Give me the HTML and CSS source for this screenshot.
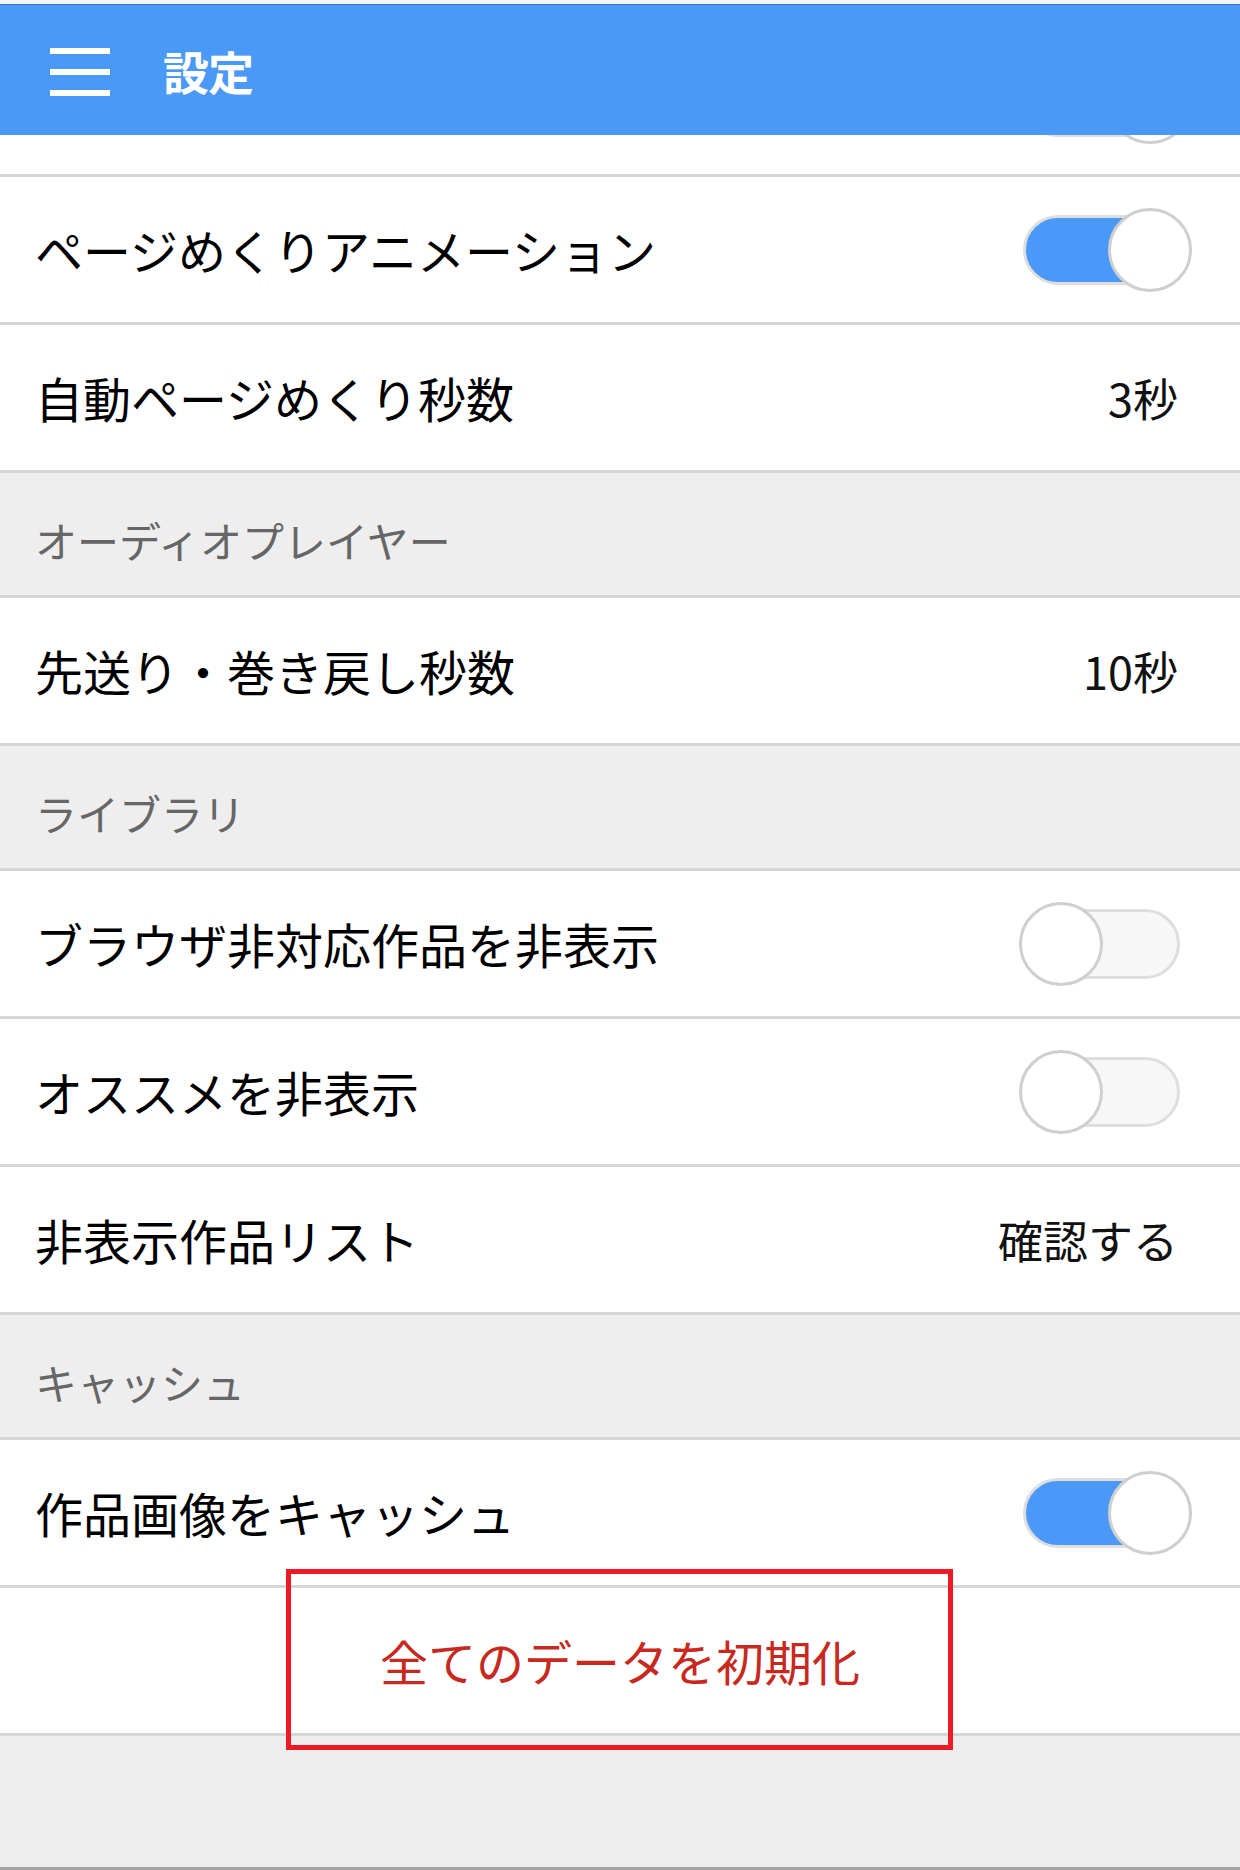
FILE: index.html
```html
<!DOCTYPE html>
<html lang="ja">
<head>
<meta charset="utf-8">
<title>設定</title>
<link rel="stylesheet" href="styles.css">
</head>
<body>
<div class="app">
  <div class="statusbar"></div>
  <header class="appbar">
    <div class="hamburger"><span></span><span></span><span></span></div>
    <h1 class="title">設定</h1>
  </header>
  <main class="content">
    <div class="list">
      <div class="row">
        <span class="label"></span>
        <div class="toggle on"><div class="track"></div><div class="knob"></div></div>
      </div>
      <div class="row">
        <span class="label">ページめくりアニメーション</span>
        <div class="toggle on"><div class="track"></div><div class="knob"></div></div>
      </div>
      <div class="row">
        <span class="label">自動ページめくり秒数</span>
        <span class="value">3秒</span>
      </div>
      <div class="section">オーディオプレイヤー</div>
      <div class="row">
        <span class="label">先送り・巻き戻し秒数</span>
        <span class="value">10秒</span>
      </div>
      <div class="section">ライブラリ</div>
      <div class="row">
        <span class="label">ブラウザ非対応作品を非表示</span>
        <div class="toggle"><div class="track"></div><div class="knob"></div></div>
      </div>
      <div class="row">
        <span class="label">オススメを非表示</span>
        <div class="toggle"><div class="track"></div><div class="knob"></div></div>
      </div>
      <div class="row">
        <span class="label">非表示作品リスト</span>
        <span class="value">確認する</span>
      </div>
      <div class="section">キャッシュ</div>
      <div class="row">
        <span class="label">作品画像をキャッシュ</span>
        <div class="toggle on"><div class="track"></div><div class="knob"></div></div>
      </div>
      <div class="row reset">
        <span class="reset-label">全てのデータを初期化</span>
      </div>
    </div>
  </main>
  <div class="highlight"></div>
</div>
</body>
</html>
```

FILE: styles.css
```css
* { box-sizing: border-box; }

html, body {
  margin: 0;
  padding: 0;
  background: #ffffff;
}

body {
  font-family: "Noto Sans CJK JP", "Noto Sans", sans-serif;
  color: #000;
}

.app {
  position: relative;
  width: 1240px;
  height: 1870px;
  display: flex;
  flex-direction: column;
  overflow: hidden;
}

.statusbar {
  height: 4px;
  background: #f3f4f6;
  flex: none;
}

.appbar {
  flex: none;
  height: 131px;
  background: #4b99f7;
  border-top: 1px solid #3b6fc4;
  display: flex;
  align-items: center;
  padding-left: 50px;
  position: relative;
  z-index: 2;
}

.hamburger {
  width: 60px;
  height: 48px;
  display: flex;
  flex-direction: column;
  justify-content: space-between;
  margin-top: 4px;
}

.hamburger span {
  display: block;
  height: 6px;
  background: #ffffff;
}

.title {
  margin: 0 0 0 53px;
  font-size: 46px;
  font-weight: 700;
  color: #ffffff;
  line-height: 1;
  letter-spacing: -1px;
}

.content {
  flex: 1;
  background: #eeeeee;
  overflow: hidden;
  border-bottom: 3px solid #a4a4a4;
}

.list {
  margin-top: -106px;
}

.row {
  height: 148px;
  background: #ffffff;
  border-bottom: 3px solid #d6d6d6;
  display: flex;
  align-items: center;
  justify-content: space-between;
  padding: 0 48px 0 35px;
}

.label {
  font-size: 48px;
  line-height: 1.2;
  font-weight: 400;
  color: #000;
}

.value {
  font-size: 45px;
  line-height: 1.2;
  color: #111;
  margin-right: 14px;
}

.section {
  height: 125px;
  background: #eeeeee;
  border-bottom: 3px solid #d6d6d6;
  display: flex;
  align-items: center;
  padding: 12px 0 0 35px;
  font-size: 42px;
  line-height: 1.2;
  color: #666666;
}

.toggle {
  position: relative;
  width: 173px;
  height: 84px;
  flex: none;
}

.track {
  position: absolute;
  left: 4px;
  top: 7px;
  width: 157px;
  height: 70px;
  border-radius: 35px;
  border: 3px solid #dedede;
  background: #f7f7f7;
}

.toggle.on .track {
  background: #4a98f7;
}

.knob {
  position: absolute;
  left: 0;
  top: 0;
  width: 84px;
  height: 84px;
  border-radius: 50%;
  border: 3px solid #cfcfcf;
  background: #ffffff;
}

.toggle.on .knob {
  left: 89px;
}

.reset {
  justify-content: center;
  padding: 0;
}

.reset-label {
  font-size: 48px;
  line-height: 1.2;
  color: #c8291f;
}

.highlight {
  position: absolute;
  left: 286px;
  top: 1569px;
  width: 667px;
  height: 181px;
  border: 5px solid #ed1c24;
  z-index: 3;
}
```
